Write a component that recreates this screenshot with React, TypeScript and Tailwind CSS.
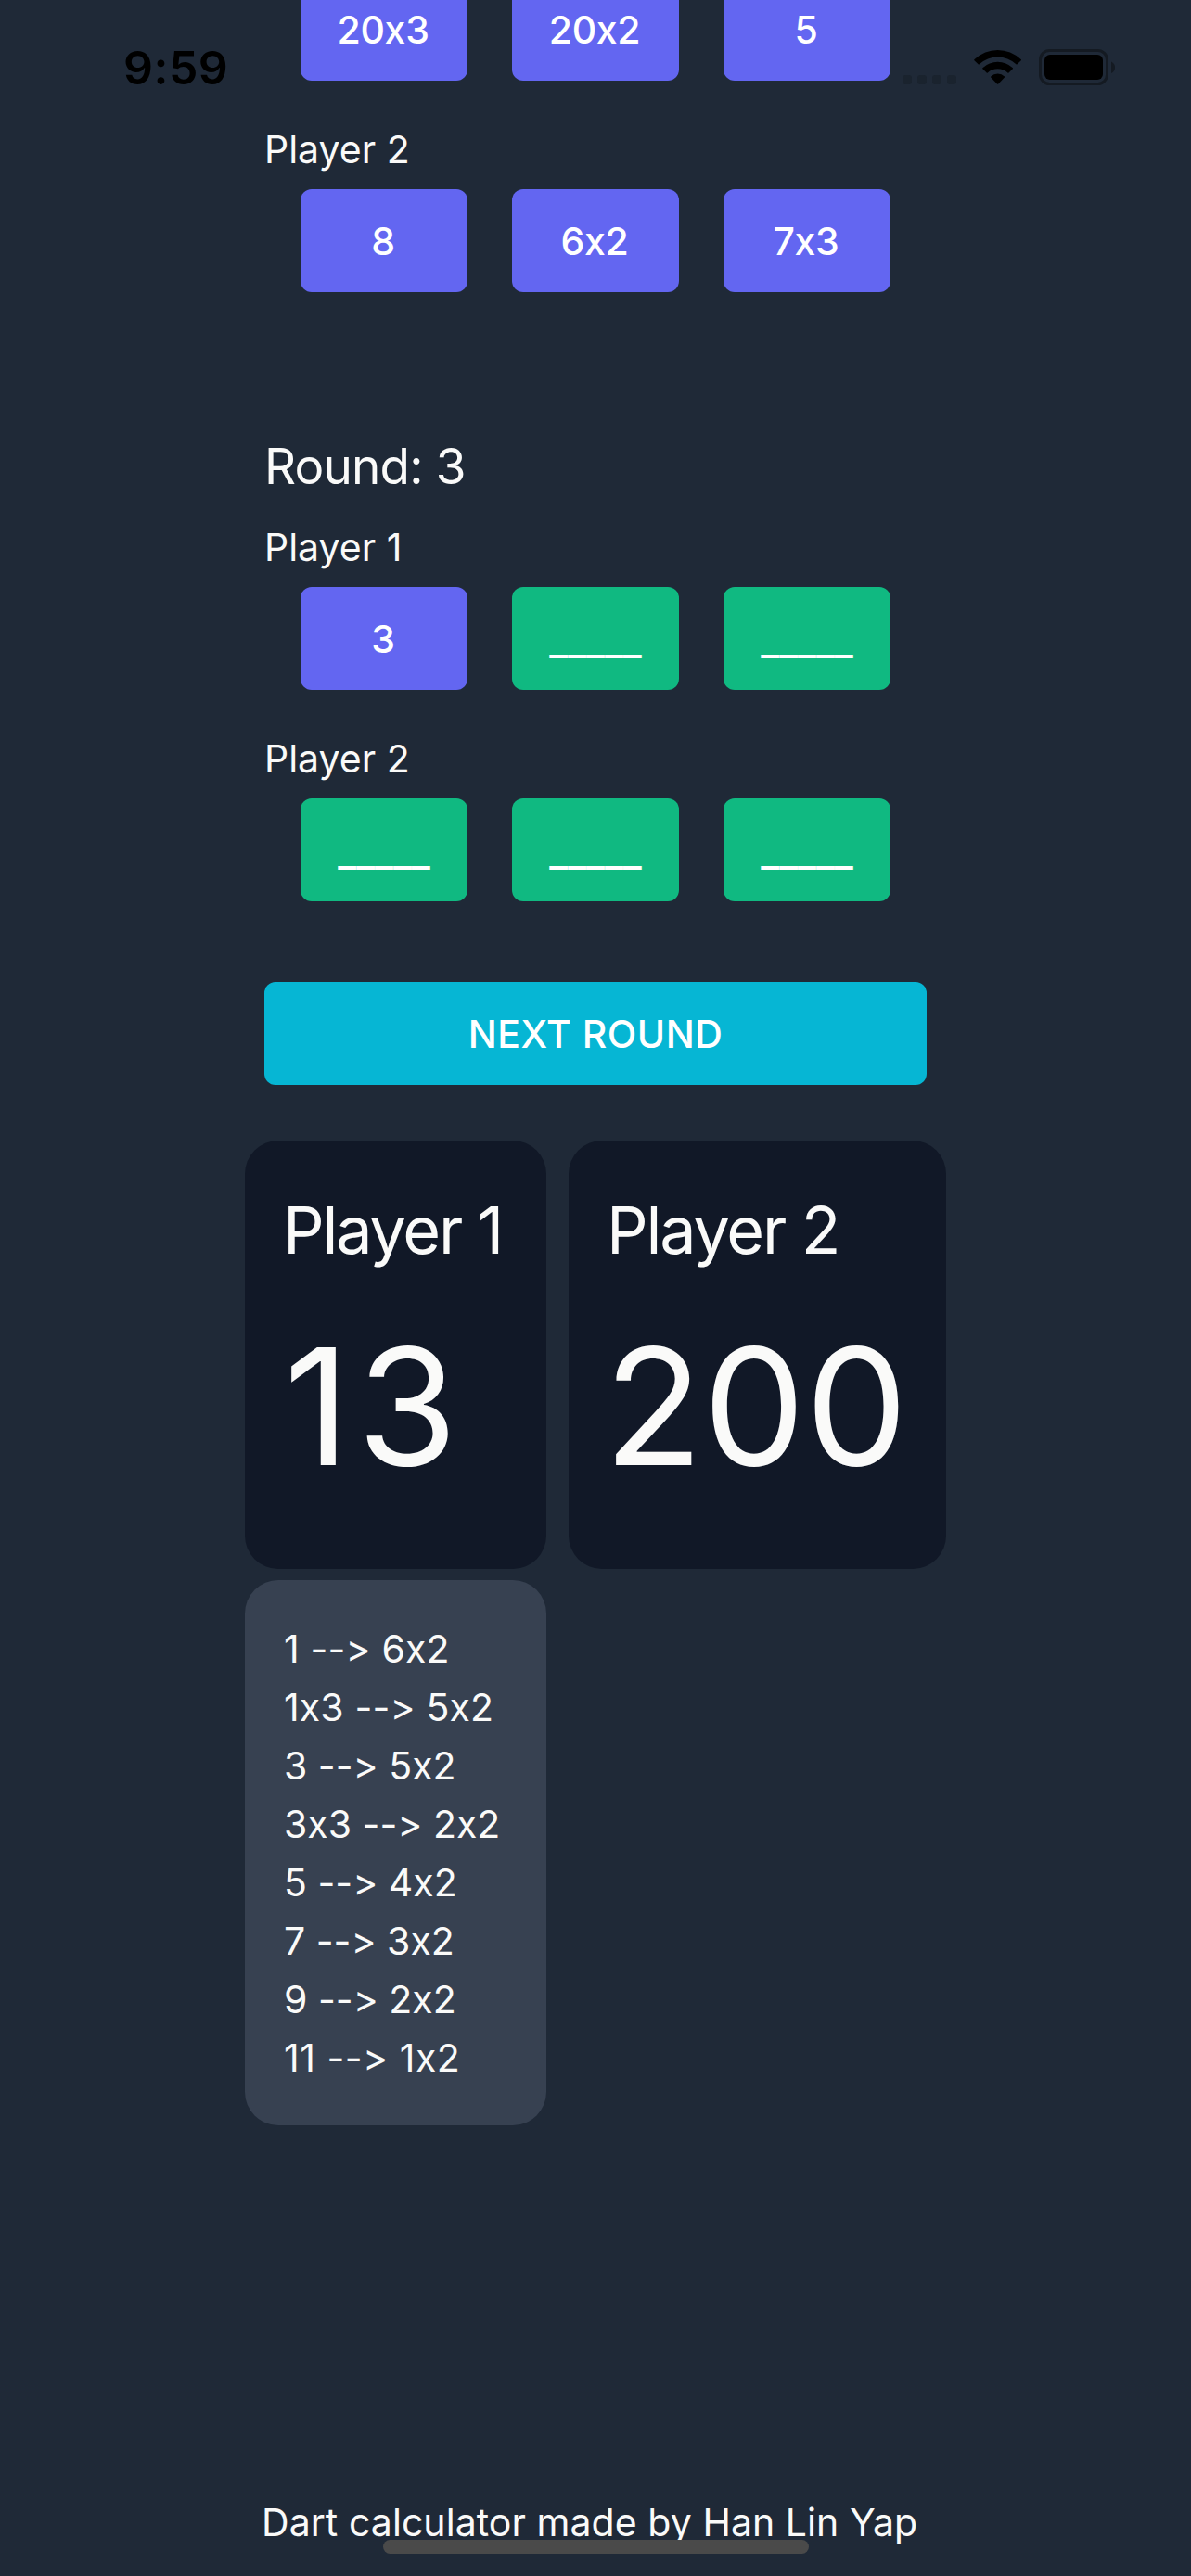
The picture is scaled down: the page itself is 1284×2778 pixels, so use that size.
const BLANK = '_____';

function Throw({ value }: { value: string }) {
  const blank = value === BLANK;
  return (
    <button
      className={
        'flex h-[111px] w-[180px] items-center justify-center rounded-xl leading-[63px] font-medium text-white ' +
        (blank ? 'bg-[#10b981] pt-[3px] text-[43px]' : 'bg-[#6366f1] pt-0.5 pr-0.5 text-[41px] tracking-[-0.3px]')
      }
    >
      {value}
    </button>
  );
}

function Throws({ values }: { values: string[] }) {
  return (
    <div className="flex gap-12 pl-[39px]">
      {values.map((v, i) => (
        <Throw key={i} value={v} />
      ))}
    </div>
  );
}

function PlayerRow({ name, throws }: { name: string; throws: string[] }) {
  return (
    <div>
      <div className="mb-2.5 text-[41px] leading-[65px]">{name}</div>
      <Throws values={throws} />
    </div>
  );
}

function ScoreCard({ name, score, scoreClass }: { name: string; score: string; scoreClass: string }) {
  return (
    <div className="rounded-[36px] bg-[#111827] px-[42px] pt-[43px] pb-[41px]">
      <div className="-ml-px text-[70px] leading-[108px] tracking-[-2.15px] whitespace-nowrap">{name}</div>
      <div className={'text-[175px] leading-[270px] ' + scoreClass}>{score}</div>
    </div>
  );
}

function StatusBar() {
  return (
    <div className="absolute inset-x-0 top-0 h-[120px] text-black">
      <div className="absolute top-[43px] left-[133px] text-[50px] leading-[60px] font-semibold tracking-[0.5px]">9:59</div>
      <svg className="absolute top-[50px] left-[970px]" width="240" height="46" viewBox="970 50 240 46">
        <g fill="#1a232e">
          <rect x="973" y="81" width="10" height="10" rx="3" />
          <rect x="989" y="81" width="10" height="10" rx="3" />
          <rect x="1005" y="81" width="10" height="10" rx="3" />
          <rect x="1021" y="81" width="10" height="10" rx="3" />
        </g>
        <path d="M1050.3 64.2 Q1061.5 54 1075.6 54 Q1089.7 54 1100.9 64.2 Q1101.2 64.7 1100.8 65.2 L1096.6 69.3 Q1096 69.8 1095.4 69.3 Q1086.8 61.5 1075.6 61.5 Q1064.4 61.5 1055.8 69.3 Q1055.2 69.8 1054.6 69.3 L1050.4 65.2 Q1050 64.7 1050.3 64.2 Z" />
        <path d="M1059.3 73.3 Q1066.4 66.8 1075.6 66.8 Q1084.8 66.8 1091.9 73.3 Q1092.2 73.8 1091.8 74.3 L1087.5 78.5 Q1087 79 1086.4 78.5 Q1081.8 74.3 1075.6 74.3 Q1069.4 74.3 1064.8 78.5 Q1064.2 79 1063.7 78.5 L1059.4 74.3 Q1059 73.8 1059.3 73.3 Z" />
        <path d="M1068.2 82.5 Q1071.4 79.5 1075.6 79.5 Q1079.8 79.5 1083 82.5 Q1083.3 83 1082.9 83.5 L1076.3 90.4 Q1075.6 91.1 1074.9 90.4 L1068.3 83.5 Q1067.9 83 1068.2 82.5 Z" />
        <rect x="1121.5" y="54.5" width="72" height="36" rx="10" fill="none" stroke="#141a22" strokeWidth="3" />
        <rect x="1126" y="59" width="63" height="27" rx="6" />
        <path d="M1198 66.5 Q1202 68.5 1202 72.7 Q1202 77 1198 79 Z" fill="#141a22" />
      </svg>
    </div>
  );
}

const checkouts = [
  '1 --> 6x2',
  '1x3 --> 5x2',
  '3 --> 5x2',
  '3x3 --> 2x2',
  '5 --> 4x2',
  '7 --> 3x2',
  '9 --> 2x2',
  '11 --> 1x2',
];

export default function App() {
  return (
    <div className="relative flex h-[2778px] w-[1284px] flex-col overflow-hidden bg-[#1f2937] font-['Inter',sans-serif] text-[#fafaf9] [font-feature-settings:'calt'_0]">
      <div className="-mt-6 ml-[285px] w-[714px]">
        <div className="space-y-[42px]">
          <Throws values={['20x3', '20x2', '5']} />
          <PlayerRow name="Player 2" throws={['8', '6x2', '7x3']} />
        </div>
        <h2 className="mt-[151px] text-[53px] leading-[75px] tracking-[-0.8px]">Round: 3</h2>
        <div className="mt-[17px] space-y-[42px]">
          <PlayerRow name="Player 1" throws={['3', BLANK, BLANK]} />
          <PlayerRow name="Player 2" throws={[BLANK, BLANK, BLANK]} />
        </div>
        <button className="mt-[87px] flex h-[111px] w-full items-center justify-center rounded-xl bg-[#06b6d4] pt-0.5 text-[41px] font-medium tracking-[0.5px] text-white">
          NEXT ROUND
        </button>
      </div>

      <div className="mt-[60px] ml-[264px] grid grid-cols-[325px_407px] gap-x-6 gap-y-3">
        <ScoreCard name="Player 1" score="13" scoreClass="tracking-[7.8px]" />
        <ScoreCard name="Player 2" score="200" scoreClass="-ml-1" />
        <ul className="rounded-[36px] bg-[#374151] px-[42px] pt-[43px] pb-[41px] text-[41px] leading-[63px] whitespace-nowrap">
          {checkouts.map((c) => (
            <li key={c} className={c.startsWith('11') ? 'tracking-[0.5px]' : c.startsWith('1') ? 'tracking-[0.15px]' : ''}>
              {c}
            </li>
          ))}
        </ul>
      </div>

      <footer className="mt-auto mb-[26px] ml-[282px] text-[41px] leading-[63px] tracking-[0.06px] whitespace-nowrap">
        Dart calculator made by Han Lin Yap
      </footer>

      <StatusBar />
      <div className="absolute top-[2739px] left-[413px] h-[15px] w-[459px] rounded-full bg-[#4a4a4a]" />
    </div>
  );
}
